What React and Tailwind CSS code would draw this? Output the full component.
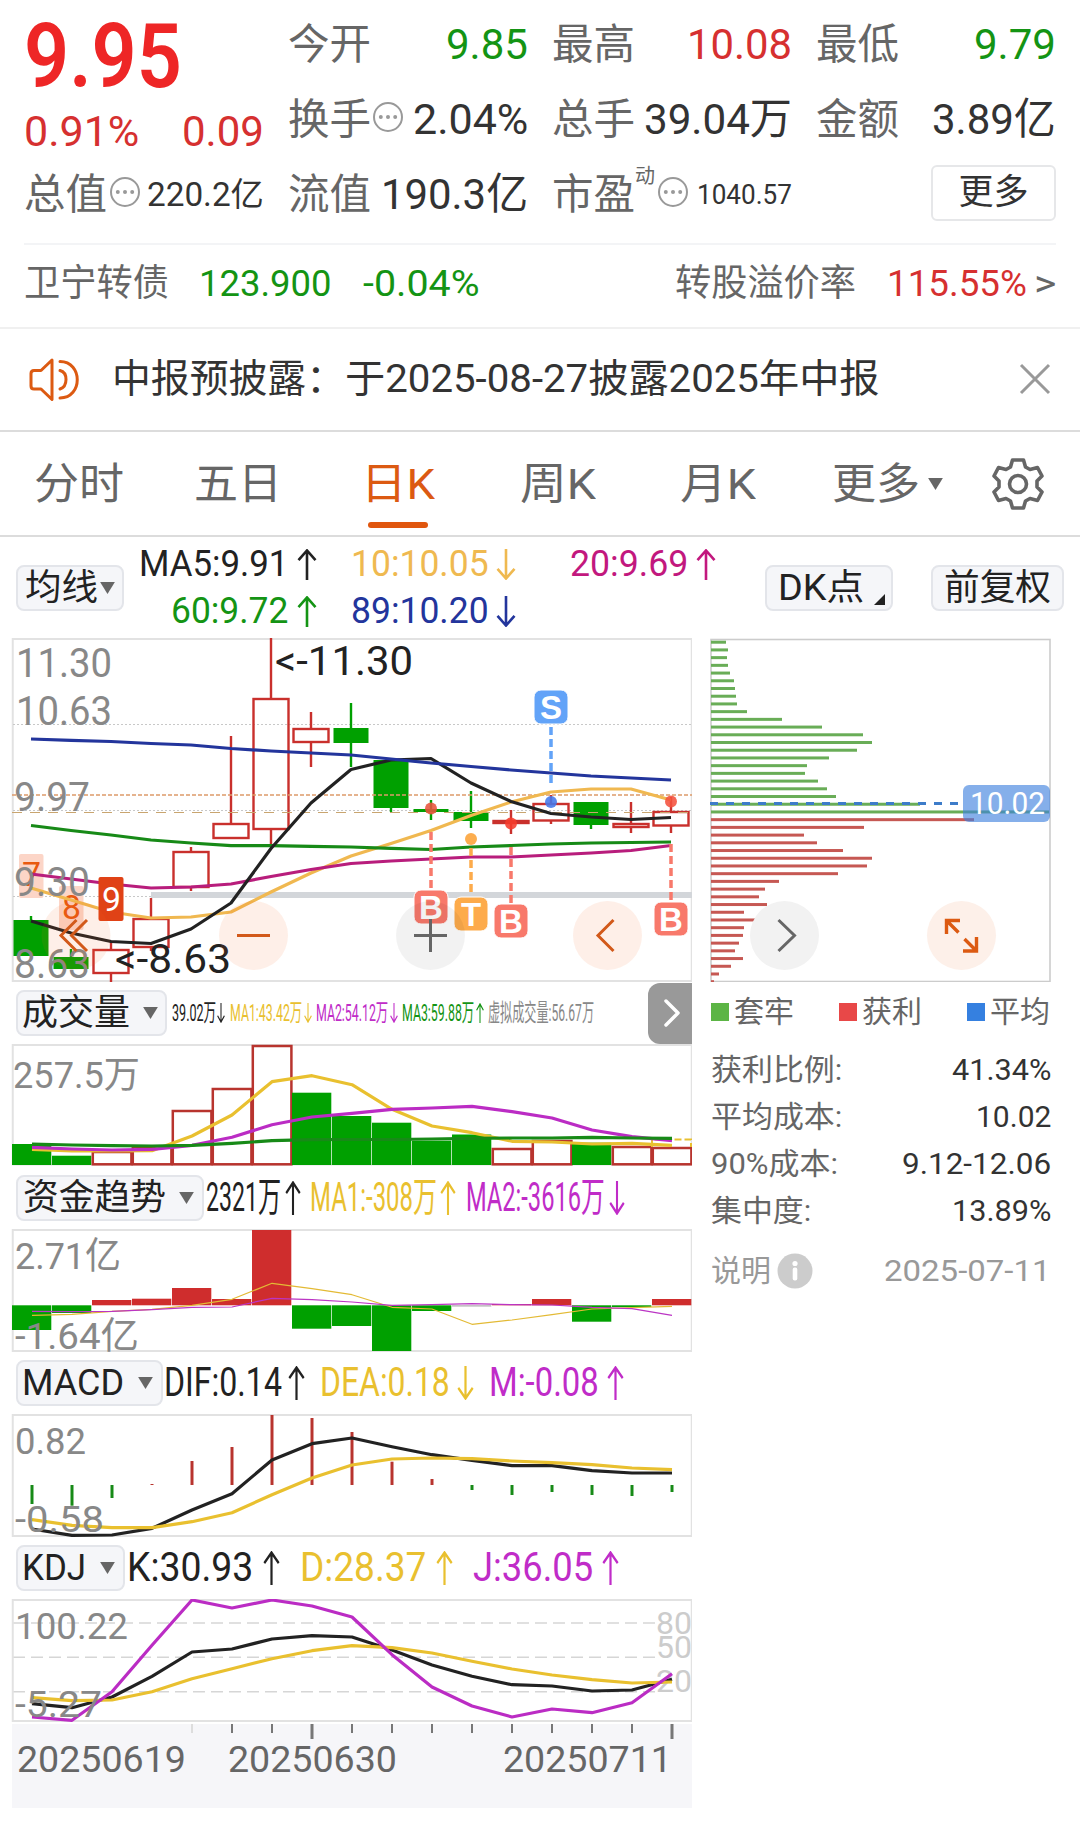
import React, { useLayoutEffect, useRef, useState } from 'react';

const RED = '#c9302c';
const GREEN = '#00a000';
const FONT = 'Roboto, "Noto Sans CJK SC", sans-serif';

// Candles: [open/close top, open/close bottom, wick top, wick bottom, type]
const candles = [
    [920, 956, 916, 956, 'down'],
    [957, 969, 949, 969, 'down'],
    [950, 973, 942, 982, 'up'],
    [919, 947, 898, 951, 'up'],
    [852, 887, 847, 891, 'up'],
    [824, 838, 736, 838, 'up'],
    [699, 829, 638, 844, 'up'],
    [729, 742, 712, 767, 'up'],
    [728, 743, 703, 767, 'down'],
    [760, 808, 760, 812, 'down'],
    [809, 812, 800, 820, 'down'],
    [812, 821, 791, 828, 'down'],
    [821, 823, 810, 834, 'up'],
    [804, 820.5, 795, 824, 'up'],
    [802, 825, 802, 829, 'down'],
    [824, 827, 802, 833, 'up'],
    [812, 825.5, 797, 833, 'up'],
];

const ma = {
    blue: [739, 740.3, 741.5, 743.5, 745, 748.5, 751, 753, 755, 759, 763, 766.5, 770, 773, 776, 778, 780],
    green: [825.5, 830.5, 835, 840, 843, 845.7, 845.7, 846.3, 847, 848.3, 849.5, 847, 845.5, 844, 843, 842.5, 842],
    pink: [874, 879, 884, 888, 887, 884, 876.5, 869.5, 863.5, 861, 859, 857, 857, 855, 853, 850.5, 845.5],
    yellow: [888, 900, 912, 918, 917, 912, 892, 873, 856, 843.5, 830.5, 815.5, 802, 792, 789, 789, 800],
    black: [921, 933, 941.5, 943.5, 929, 903, 848.5, 803, 769.5, 760, 758.5, 783, 801.5, 813.5, 817, 819.5, 817.5],
};

const volume = [
    [1144, 0], [1155.7, 0], [1152, 1], [1147, 1], [1111, 1], [1089, 1], [1046, 1], [1092.7, 0], [1116, 0],
    [1122.7, 0], [1140.7, 0], [1134.5, 0], [1149, 1], [1141, 1], [1142.7, 0], [1147, 1], [1148, 1],
];
const volMa = {
    yellow: [1149.3, 1151, 1151, 1150.7, 1136, 1115, 1081.7, 1075.7, 1084.7, 1109.3, 1126, 1132.7, 1141.3, 1142, 1144, 1143.3, 1145.3],
    purple: [1147.3, 1149, 1150, 1149.3, 1145.3, 1137.3, 1124.7, 1117, 1113.3, 1109.3, 1108, 1106.3, 1111.7, 1118, 1130, 1136.7, 1140.7],
    green: [1144, 1145, 1145.7, 1146, 1145.3, 1143.3, 1140.7, 1139.7, 1139.5, 1139.5, 1139, 1138.3, 1138, 1138, 1137.3, 1138, 1138.3],
};

const fund = [1330, 1313, 1300, 1298.7, 1288, 1299, 1230, 1328.7, 1326, 1351, 1311, 1306.5, 1304, 1299, 1321.7, 1307, 1299];
const fundMa = {
    yellow: [1315.3, 1314.3, 1311.3, 1309.3, 1305.3, 1299.3, 1283.3, 1288.7, 1294.7, 1307.3, 1309, 1324.3, 1320, 1314.7, 1309, 1307.7, 1306.3],
    purple: [1311.3, 1311.7, 1311.3, 1309.7, 1307.3, 1307, 1298.3, 1299.7, 1302, 1305.3, 1304.7, 1303.7, 1304.7, 1305, 1307.3, 1308.7, 1315.3],
};

const macd = [1504, 1505.7, 1498, 1484, 1461, 1447, 1415, 1418, 1432, 1461.7, 1479, 1490, 1495, 1492, 1495, 1496, 1492];
const dif = [1529, 1535.3, 1535, 1528.3, 1510, 1493.7, 1460, 1443.7, 1438, 1446.7, 1454.7, 1460.3, 1465.7, 1465.7, 1470.7, 1473, 1473];
const dea = [1519.7, 1525.3, 1527.7, 1527.7, 1521.7, 1512.7, 1494.7, 1478, 1465, 1459, 1458, 1458.7, 1461, 1462.7, 1464.7, 1468, 1469.7];

const kdj = {
    k: [1703.7, 1707.7, 1697, 1676.3, 1652, 1649, 1639, 1635.7, 1637, 1650, 1665, 1676.3, 1684.7, 1686, 1691, 1690, 1679.3],
    d: [1697.7, 1700.7, 1700, 1691.7, 1678.7, 1668.7, 1658.7, 1650.7, 1645.7, 1647.7, 1653, 1661.3, 1669, 1675, 1679.7, 1683, 1682],
    j: [1717, 1720.3, 1691.7, 1645.3, 1600, 1608, 1600, 1606, 1617, 1654.7, 1687, 1706, 1717, 1709, 1712.7, 1702.7, 1673.7],
};

// Chip distribution, bar lengths in px from top to bottom
const lossChips = [15, 17, 16, 17, 19, 23, 24, 25, 26, 36, 71, 111, 152, 161, 146, 118, 96, 94, 107, 116, 125, 209, 338];
const profitChips = [263, 153, 93, 106, 132, 161, 156, 127, 68, 54, 48, 56, 33, 46, 33, 32, 28, 24, 32, 20, 8, 3];

// Squeezes or stretches its text to the width of the box
function Fit({ className = '', children }) {
    const box = useRef(null);
    const text = useRef(null);
    const [scale, setScale] = useState(1);

    useLayoutEffect(() => {
        setScale(box.current.clientWidth / text.current.offsetWidth);
    }, [children]);

    return (
        <span ref={box} className={`block shrink-0 whitespace-nowrap ${className}`}>
            <span ref={text} className="inline-block origin-left" style={{ transform: `scaleX(${scale})` }}>
                {children}
            </span>
        </span>
    );
}

function Arrow({ up, className = '' }) {
    return (
        <svg viewBox="0 0 20 32" preserveAspectRatio="none" className={`shrink-0 ${className}`} fill="none" stroke="currentColor" strokeWidth="2.6">
            {up ? <path d="M10 32V1.5M1.5 11.500L10 1.500L18.5 11.500" /> : <path d="M10 0V30.500M1.5 20.500L10 30.500L18.5 20.500" />}
        </svg>
    );
}

function Caret({ className = '' }) {
    return (
        <svg viewBox="0 0 16 13" className={`w-[15px] h-[12px] shrink-0 ${className}`} fill="#666">
            <path d="M0 0H16L8 13Z" />
        </svg>
    );
}

function Dots({ className = '' }) {
    return (
        <svg viewBox="0 0 32 32" className={`mb-[6px] h-8 w-8 shrink-0 ${className}`} fill="#999">
            <circle cx="16" cy="16" r="14" fill="none" stroke="#999" strokeWidth="2" />
            <circle cx="8.8" cy="16" r="2" />
            <circle cx="16" cy="16" r="2" />
            <circle cx="23.2" cy="16" r="2" />
        </svg>
    );
}

// Text inside a chart
function Label({ x, y, w, size = 37, fill = '#888', children }) {
    return (
        <text x={x} y={y} fontSize={size} fill={fill} textLength={w} lengthAdjust="spacingAndGlyphs" fontFamily={FONT}>
            {children}
        </text>
    );
}

function Line({ data, x0 = 32, color, width = 3.2 }) {
    const points = data.map((y, i) => `${x0 + i * 40},${y}`).join(' ');
    return <polyline points={points} fill="none" stroke={color} strokeWidth={width} strokeLinejoin="round" />;
}

function Frame({ y, h }) {
    return <rect x="12.75" y={y} width="679" height={h} fill="none" stroke="#e2e2e2" strokeWidth="2" />;
}

function Marker({ x, y, letter, color, from, to, dot, dotColor }) {
    return (
        <g>
            <line x1={x} x2={x} y1={from} y2={to} stroke={color} strokeWidth="3.5" strokeDasharray="8 4" />
            <circle cx={x} cy={dot} r="6" fill={dotColor} opacity="0.88" />
            <rect x={x - 17} y={y - 17} width="34" height="34" rx="7" fill={color} stroke="#fff" strokeWidth="1" />
            <text x={x} y={y + 11.5} textAnchor="middle" fontSize="33" fontWeight="700" fill="#fff" fontFamily='"Liberation Sans", sans-serif'>
                {letter}
            </text>
        </g>
    );
}

function Selector({ className = '', textClass, caretClass, children }) {
    return (
        <button className={`flex h-[46px] shrink-0 items-center rounded-lg border-2 border-[#e3e5ea] bg-[#f5f6f9] text-[36px] leading-[42px] text-[#222] ${className}`}>
            <Fit className={textClass}>{children}</Fit>
            <Caret className={caretClass} />
        </button>
    );
}

function PriceChart() {
    return (
        <svg viewBox="0 638 692 344" className="block w-[692px] h-[344px]">
            <Frame y={639} h={342} />
            {[724.5, 810.5, 896.5].map((y) => (
                <line key={y} x1="13" x2="691" y1={y} y2={y} stroke="#c8c8c8" strokeWidth="1" strokeDasharray="2 2" />
            ))}
            <rect x="151" y="892" width="541" height="6" fill="#d3d6da" />

            {candles.map(([top, bottom, high, low, type], i) => {
                const x = 31 + i * 40;
                const color = type === 'up' ? RED : GREEN;
                return (
                    <g key={i} stroke={color} strokeWidth="2.4">
                        <line x1={x} x2={x} y1={high} y2={top} />
                        <line x1={x} x2={x} y1={bottom} y2={low} />
                        {type === 'up'
                            ? <rect x={x - 17.5} y={top} width="35" height={bottom - top} fill="none" />
                            : <rect x={x - 17.5} y={top} width="35" height={bottom - top} fill={GREEN} stroke="none" />}
                    </g>
                );
            })}

            <line x1="12" x2="692" y1="795" y2="795" stroke="#dd9a6a" strokeWidth="1.5" strokeDasharray="4 2" />
            <line x1="12" x2="692" y1="812.5" y2="812.5" stroke="#c9a56f" strokeWidth="1.2" strokeDasharray="10 8" />

            <rect x="19" y="854" width="24.5" height="44" rx="2" fill="#fcd5c7" />
            <rect x="59" y="886" width="24.5" height="44" rx="2" fill="#fcd5c7" />
            <Label x={22} y={886} w={19} size={34} fill="#e8590f">7</Label>
            <Label x={62} y={919} w={19} size={34} fill="#e8590f">8</Label>

            <Line x0={31} data={ma.yellow} color="#f0b850" />
            <Line x0={31} data={ma.pink} color="#b81d7c" />
            <Line x0={31} data={ma.green} color="#178a17" />
            <Line x0={31} data={ma.black} color="#222" />
            <Line x0={31} data={ma.blue} color="#23359c" />

            <rect x="98.5" y="877" width="25" height="44" rx="2" fill="#e04216" />
            <Label x={102} y={911} w={19} size={34} fill="#fff">9</Label>

            <Label x={16} y={677} w={96} size={41}>11.30</Label>
            <Label x={16} y={725} w={96} size={41}>10.63</Label>
            <Label x={14} y={811} w={76} size={41}>9.97</Label>
            <Label x={14} y={896} w={76} size={41}>9.30</Label>
            <Label x={14} y={978} w={76} size={41}>8.63</Label>
            <Label x={275} y={675} w={138} size={40} fill="#222">&lt;-11.30</Label>
            <Label x={115} y={973} w={116} size={40} fill="#222">&lt;-8.63</Label>

            <Marker x={551} y={707} letter="S" color="#62a3f8" from={727} to={783} dot={802} dotColor="#4379ec" />
            <Marker x={431} y={907} letter="B" color="#f8796b" from={832} to={889} dot={808.5} dotColor="#e8533c" />
            <Marker x={471} y={914} letter="T" color="#fdab4b" from={848} to={896} dot={839} dotColor="#fca237" />
            <Marker x={511} y={921} letter="B" color="#f8796b" from={847} to={903} dot={823.5} dotColor="#f53b2b" />
            <Marker x={671} y={919} letter="B" color="#f8796b" from={844} to={901} dot={801.5} dotColor="#f4513e" />

            {[76, 253.5, 607.5].map((x) => (
                <circle key={x} cx={x} cy="935.5" r="34.5" fill="#f4641e" opacity="0.1" />
            ))}
            <circle cx="430.5" cy="935.5" r="34.5" fill="#000" opacity="0.05" />
            <g fill="none" stroke="#d2591a" strokeWidth="3">
                <path d="M76.5 920L61 935.5L76.5 951M87 920L71.5 935.5L87 951" />
                <path d="M237 935.5H270" />
                <path d="M613.5 920L598 935.5L613.5 951" />
                <path d="M414 935.5H447M430.5 919V952" stroke="#666" />
            </g>
        </svg>
    );
}

function ChipChart() {
    return (
        <svg viewBox="710 638 342 344" className="block w-[342px] h-[344px]">
            <rect x="711" y="639.5" width="339" height="342" fill="none" stroke="#ccc" strokeWidth="1.6" />
            {lossChips.map((w, i) => (
                <rect key={i} x="711" y={640.7 + i * 7.716} width={w} height="3" fill="#69ad57" />
            ))}
            {profitChips.map((w, i) => (
                <rect key={i} x="711" y={640.7 + (i + 23) * 7.716} width={w} height="3" fill="#c65853" />
            ))}
            <line x1="710" x2="960" y1="803.5" y2="803.5" stroke="#3d7cc9" strokeWidth="3" strokeDasharray="8 8" />
            <rect x="963" y="785" width="87" height="37" rx="6" fill="#3d80dd" opacity="0.63" />
            <Label x={970} y={814} w={75} size={31} fill="#fff">10.02</Label>

            <circle cx="784.5" cy="935.5" r="34.5" fill="#f2f2f2" />
            <circle cx="961.5" cy="935.5" r="34.5" fill="#fdf0e9" />
            <path d="M778.5 920L794.5 935.5L778.5 951" fill="none" stroke="#666" strokeWidth="3" />
            <path
                d="M946.5 934V920.5H960M947 921L958.5 932.5M976.5 937V951H963M964.5 939L976 950.5"
                fill="none"
                stroke="#dc5a12"
                strokeWidth="3.4"
            />
        </svg>
    );
}

function VolumeChart() {
    return (
        <svg viewBox="0 1044 692 122" className="block w-[692px] h-[122px]">
            <Frame y={1045} h={119.5} />
            {volume.map(([top, up], i) => up
                ? <rect key={i} x={12.8 + i * 40} y={top} width="38.6" height={1164.3 - top} fill="none" stroke="#b8342e" strokeWidth="2.5" />
                : <rect key={i} x={12 + i * 40} y={top} width="39.3" height={1165 - top} fill={GREEN} />)}
            <path d="M652 1147V1139.5H691V1147" fill="none" stroke="#e8c030" strokeWidth="2" strokeDasharray="7 3" />
            <Line data={volMa.yellow} color="#e9c02f" />
            <Line data={volMa.purple} color="#bb2cc4" />
            <Line data={volMa.green} color="#178a17" />
            <Label x={13} y={1088} w={127}>257.5万</Label>
        </svg>
    );
}

function FundChart() {
    return (
        <svg viewBox="0 1229 692 123" className="block w-[692px] h-[123px]">
            <Frame y={1230} h={121} />
            {fund.map((y, i) => (
                <rect
                    key={i}
                    x={12 + i * 40}
                    y={Math.min(y, 1305.3)}
                    width="39.3"
                    height={Math.abs(y - 1305.3)}
                    fill={i === 11 ? '#aaa' : y < 1305.3 ? '#cf2d2d' : GREEN}
                />
            ))}
            <Line data={fundMa.yellow} color="#e3ba35" width={1.2} />
            <Line data={fundMa.purple} color="#bb35c4" width={1.2} />
            <Label x={15} y={1269} w={106}>2.71亿</Label>
            <Label x={15} y={1348.5} w={124}>-1.64亿</Label>
        </svg>
    );
}

function MacdChart() {
    return (
        <svg viewBox="0 1414 692 123" className="block w-[692px] h-[123px]">
            <Frame y={1415} h={121} />
            {macd.map((y, i) => (
                <line key={i} x1={32 + i * 40} x2={32 + i * 40} y1="1485" y2={y} stroke={y < 1485 ? '#b8342e' : '#178a17'} strokeWidth="3" />
            ))}
            <Line data={dif} color="#222" />
            <Line data={dea} color="#e9c02f" />
            <Label x={15} y={1453.5} w={71}>0.82</Label>
            <Label x={15} y={1531.5} w={89}>-0.58</Label>
        </svg>
    );
}

function KdjChart() {
    return (
        <svg viewBox="0 1599 692 123" className="block w-[692px] h-[123px]">
            {[1623, 1657.3, 1691.7].map((y) => (
                <line key={y} x1="13" x2="658" y1={y} y2={y} stroke="#d6d6d6" strokeWidth="1.6" strokeDasharray="12 6" />
            ))}
            <Frame y={1600} h={121} />
            <Label x={656} y={1634} w={36} size={31} fill="#ccc">80</Label>
            <Label x={656} y={1657.5} w={36} size={31} fill="#ccc">50</Label>
            <Label x={656} y={1691.5} w={36} size={31} fill="#ccc">20</Label>
            <Line data={kdj.k} color="#222" />
            <Line data={kdj.d} color="#e9c02f" />
            <Line data={kdj.j} color="#bb2cc4" />
            <Label x={15} y={1638.5} w={113}>100.22</Label>
            <Label x={15} y={1716.5} w={87}>-5.27</Label>
        </svg>
    );
}

function DateAxis() {
    return (
        <div className="ml-3 mt-[2px] h-[84px] w-[680px] bg-[#f6f6f9]">
            <svg viewBox="12 1724 680 84" className="block w-[680px] h-[84px]">
                {Array.from({ length: 13 }, (_, i) => (
                    <line
                        key={i}
                        x1={192 + i * 40}
                        x2={192 + i * 40}
                        y1="1724"
                        y2={i === 3 || i === 12 ? 1739 : 1733}
                        stroke={i === 0 ? '#ddd' : '#777'}
                        strokeWidth={i === 3 || i === 12 ? 3 : 2}
                    />
                ))}
                <Label x={17} y={1771.5} w={169} fill="#666">20250619</Label>
                <Label x={228} y={1771.5} w={169} fill="#666">20250630</Label>
                <Label x={503} y={1771.5} w={169} fill="#666">20250711</Label>
            </svg>
        </div>
    );
}

function Quote() {
    return (
        <section className="flex h-[243px] justify-between px-6 pt-[7px] text-[43px] text-[#333]">
            <div className="flex w-[240px] flex-col">
                <Fit className="h-[97px] w-[158px] text-[89px] leading-[99px] font-semibold text-[#ee2626]">9.95</Fit>
                <div className="flex h-[54px] items-center justify-between leading-[54px] text-[#d63030]">
                    <Fit className="w-[115px]">0.91%</Fit>
                    <Fit className="w-[82px]">0.09</Fit>
                </div>
                <div className="flex h-[73px] items-center">
                    <Fit className="w-[83px] text-[42px] text-[#666]">总值</Fit>
                    <Dots className="ml-[2px]" />
                    <Fit className="ml-auto w-[117px] text-[33px]">220.2亿</Fit>
                </div>
            </div>
            <div className="flex w-[240px] flex-col">
                <div className="flex h-[75px] items-center justify-between">
                    <Fit className="w-[83px] text-[42px] text-[#666]">今开</Fit>
                    <Fit className="w-[82px] text-[#149414]">9.85</Fit>
                </div>
                <div className="flex h-[75px] items-center">
                    <Fit className="w-[83px] text-[42px] text-[#666]">换手</Fit>
                    <Dots className="ml-[1px]" />
                    <Fit className="ml-auto w-[115px]">2.04%</Fit>
                </div>
                <div className="flex h-[75px] items-center justify-between">
                    <Fit className="w-[83px] text-[42px] text-[#666]">流值</Fit>
                    <Fit className="w-[147px]">190.3亿</Fit>
                </div>
            </div>
            <div className="flex w-[240px] flex-col">
                <div className="flex h-[75px] items-center justify-between">
                    <Fit className="w-[83px] text-[42px] text-[#666]">最高</Fit>
                    <Fit className="w-[105px] text-[#d63030]">10.08</Fit>
                </div>
                <div className="flex h-[75px] items-center justify-between">
                    <Fit className="w-[83px] text-[42px] text-[#666]">总手</Fit>
                    <Fit className="w-[148px]">39.04万</Fit>
                </div>
                <div className="flex h-[75px] items-center">
                    <Fit className="w-[83px] text-[42px] text-[#666]">市盈</Fit>
                    <span className="mb-[38px] text-[20px] leading-5 text-[#666]">动</span>
                    <Dots className="ml-[2px]" />
                    <Fit className="ml-auto w-[95px] text-[28px]">1040.57</Fit>
                </div>
            </div>
            <div className="flex w-[240px] flex-col">
                <div className="flex h-[75px] items-center justify-between">
                    <Fit className="w-[83px] text-[42px] text-[#666]">最低</Fit>
                    <Fit className="w-[82px] text-[#149414]">9.79</Fit>
                </div>
                <div className="flex h-[75px] items-center justify-between">
                    <Fit className="w-[83px] text-[42px] text-[#666]">金额</Fit>
                    <Fit className="w-[124px]">3.89亿</Fit>
                </div>
                <div className="flex h-[75px] items-center justify-end">
                    <button className="mb-[3px] h-14 w-[125px] rounded-md border-2 border-[#e6e7e9] text-[35px] leading-[50px]">更多</button>
                </div>
            </div>
        </section>
    );
}

function Tabs() {
    return (
        <nav className="flex h-[105px] items-center border-b-2 border-[#dcdcdc] pl-[34px] text-[43px] leading-[60px] text-[#666]">
            <Fit className="w-[90px]">分时</Fit>
            <Fit className="ml-[70px] w-[88px]">五日</Fit>
            <div className="ml-[79px] flex h-[105px] flex-col items-center pt-[23px] text-[#dc5a12]">
                <Fit className="w-[74px]">日K</Fit>
                <span className="mt-2 h-[6px] w-[60px] rounded-full bg-[#e0560e]" />
            </div>
            <Fit className="ml-[85px] w-[76px]">周K</Fit>
            <Fit className="ml-[84px] w-[76px]">月K</Fit>
            <Fit className="ml-[76px] w-[88px]">更多</Fit>
            <Caret className="ml-2" />
            <svg viewBox="-27 -27 54 54" className="ml-[48px] h-[54px] w-[54px]" fill="none" stroke="#666" strokeWidth="3.6" strokeLinejoin="round">
                <path d="M-5.5 -24H5.5L7.5 -17L12 -14.5L19.5 -16.5L24 -8L19 -3V3L24 8L19.5 16.5L12 14.5L7.5 17L5.5 24H-5.5L-7.5 17L-12 14.5L-19.5 16.5L-24 8L-19 3V-3L-24 -8L-19.5 -16.5L-12 -14.5L-7.5 -17Z" />
                <circle r="8.5" />
            </svg>
        </nav>
    );
}

function Averages() {
    return (
        <div className="flex h-[101px] items-center px-4 text-[36px] leading-[47px]">
            <Selector className="w-[108px] pl-[7px]" textClass="w-[73px]" caretClass="ml-[2px]">均线</Selector>
            <div className="ml-[15px] flex flex-col items-end">
                <div className="flex items-center text-[#222]">
                    <Fit className="w-[149px]">MA5:9.91</Fit>
                    <Arrow up className="ml-[9px] h-[31px] w-[20px]" />
                </div>
                <div className="flex items-center text-[#149414]">
                    <Fit className="w-[117px]">60:9.72</Fit>
                    <Arrow up className="ml-[9px] h-[31px] w-[20px]" />
                </div>
            </div>
            <div className="ml-[34px] flex flex-col">
                <div className="flex items-center text-[#efb950]">
                    <Fit className="w-[138px]">10:10.05</Fit>
                    <Arrow className="ml-[7px] h-[31px] w-[20px]" />
                </div>
                <div className="flex items-center text-[#23359c]">
                    <Fit className="w-[138px]">89:10.20</Fit>
                    <Arrow className="ml-[7px] h-[31px] w-[20px]" />
                </div>
            </div>
            <div className="mb-[47px] ml-[54px] flex items-center text-[#c2187e]">
                <Fit className="w-[118px]">20:9.69</Fit>
                <Arrow up className="ml-[8px] h-[31px] w-[20px]" />
            </div>
            <button className="ml-auto flex h-[46px] w-[128px] rounded-lg border-2 border-[#e3e5ea] bg-[#f5f6f9] pl-[9px] leading-[42px] text-[#222]">
                <Fit className="w-[86px]">DK点</Fit>
                <svg viewBox="0 0 12 12" className="mt-[27px] ml-[12px] h-[11px] w-[11px]" fill="#222"><path d="M12 0V12H0Z" /></svg>
            </button>
            <button className="ml-[38px] h-[46px] w-[133px] rounded-lg border-2 border-[#e3e5ea] bg-[#f5f6f9] pl-[11px] leading-[42px] text-[#222]">
                <Fit className="w-[107px]">前复权</Fit>
            </button>
        </div>
    );
}

const costs = [
    { label: '获利比例:', labelClass: 'w-[131px]', value: '41.34%', valueClass: 'w-[99px]' },
    { label: '平均成本:', labelClass: 'w-[131px]', value: '10.02', valueClass: 'w-[75px]' },
    { label: '90%成本:', labelClass: 'w-[127px]', value: '9.12-12.06', valueClass: 'w-[149px]' },
    { label: '集中度:', labelClass: 'w-[100px]', value: '13.89%', valueClass: 'w-[99px]' },
];

function ChipPanel() {
    return (
        <aside className="ml-[18px] w-[342px]">
            <ChipChart />
            <div className="ml-[1px] flex h-[60px] w-[339px] items-center justify-between text-[30px] leading-[60px] text-[#666]">
                <span className="flex items-center gap-[5px]"><i className="h-[18px] w-[18px] bg-[#5cb545]" />套牢</span>
                <span className="flex items-center gap-[5px]"><i className="h-[18px] w-[18px] bg-[#e84848]" />获利</span>
                <span className="flex items-center gap-[5px]"><i className="h-[18px] w-[18px] bg-[#3580e0]" />平均</span>
            </div>
            <div className="mt-[4px] ml-[1px] w-[340px] text-[30px] leading-[47px]">
                {costs.map((row) => (
                    <div key={row.label} className="flex h-[47px] justify-between">
                        <Fit className={`text-[#666] ${row.labelClass}`}>{row.label}</Fit>
                        <Fit className={`text-[#333] ${row.valueClass}`}>{row.value}</Fit>
                    </div>
                ))}
            </div>
            <div className="mt-[13px] ml-[1px] flex h-[47px] w-[339px] items-center text-[30px] leading-[47px] text-[#999]">
                <Fit className="w-[60px]">说明</Fit>
                <svg viewBox="0 0 36 36" className="ml-[6px] h-9 w-9" fill="#fff">
                    <circle cx="18" cy="18" r="17.5" fill="#ccc" />
                    <circle cx="18" cy="10.5" r="2.6" />
                    <rect x="15.7" y="14.5" width="4.6" height="13" rx="2" />
                </svg>
                <Fit className="ml-auto w-[166px]">2025-07-11</Fit>
            </div>
        </aside>
    );
}

export default function App() {
    return (
        <main className="h-[1825px] w-[1080px] overflow-hidden bg-white font-[Roboto,'Noto_Sans_CJK_SC',sans-serif]">
            <Quote />
            <div className="mx-6 flex h-[84px] items-center border-t-2 border-[#f3f4f6] pb-[5px] text-[37px] leading-[60px] text-[#666]">
                <Fit className="w-[145px]">卫宁转债</Fit>
                <Fit className="ml-[30px] w-[133px] text-[#149414]">123.900</Fit>
                <Fit className="ml-[31px] w-[116px] text-[#149414]">-0.04%</Fit>
                <Fit className="ml-auto w-[181px]">转股溢价率</Fit>
                <Fit className="ml-[31px] w-[140px] text-[#d63030]">115.55%</Fit>
                <Fit className="ml-[7px] w-[22px]">&gt;</Fit>
            </div>

            <div className="flex h-[105px] items-center border-y-2 border-t-[#f0f0f0] border-b-[#dcdcdc] pr-[29px] pb-[2px] pl-[28px] text-[39px] leading-[60px] text-[#333]">
                <svg viewBox="28 356 54 46" className="h-[46px] w-[54px]" fill="none" stroke="#dc5a12" strokeWidth="3" strokeLinejoin="round">
                    <path d="M52 360L41 370.500H34Q31 370.500 31 373.500V386Q31 389 34 389H41L52 399.500Z" />
                    <path d="M60 370.500Q66 372 66 379.500Q66 387 60 389" strokeLinecap="round" />
                    <path d="M60 361.500C83 361.500 83 398 60 398" strokeLinecap="round" />
                </svg>
                <Fit className="ml-[30px] w-[233px]">中报预披露：</Fit>
                <Fit className="w-[535px]">于2025-08-27披露2025年中报</Fit>
                <svg viewBox="0 0 32 32" className="ml-auto h-8 w-8" stroke="#999" strokeWidth="3"><path d="M2 2L30 30M30 2L2 30" /></svg>
            </div>

            <Tabs />
            <Averages />

            <div className="flex">
                <div className="w-[692px]">
                    <PriceChart />
                    <div className="flex h-[62px] items-center pl-4 text-[24px] leading-[60px]">
                        <Selector className="w-[151px] pl-[4px]" textClass="w-[108px]" caretClass="ml-[13px]">成交量</Selector>
                        <Fit className="ml-[5px] w-[44px] text-[#222]">39.02万</Fit>
                        <Arrow className="ml-[1px] h-5 w-[8px] text-[#222]" />
                        <Fit className="ml-[5px] w-[72px] text-[#e9c02f]">MA1:43.42万</Fit>
                        <Arrow className="ml-[2px] h-5 w-[8px] text-[#e9c02f]" />
                        <Fit className="ml-[4px] w-[72px] text-[#c02cc8]">MA2:54.12万</Fit>
                        <Arrow className="ml-[2px] h-5 w-[8px] text-[#c02cc8]" />
                        <Fit className="ml-[4px] w-[72px] text-[#149414]">MA3:59.88万</Fit>
                        <Arrow up className="ml-[2px] h-5 w-[8px] text-[#149414]" />
                        <Fit className="ml-[4px] w-[106px] text-[#888]">虚拟成交量:56.67万</Fit>
                        <button className="ml-auto flex h-[61px] w-[44px] items-center justify-center rounded-l-xl bg-[#999] pl-1">
                            <svg viewBox="0 0 18 30" className="h-[30px] w-[18px]" fill="none" stroke="#fff" strokeWidth="3.5" strokeLinecap="round" strokeLinejoin="round">
                                <path d="M3 3L15 15L3 27" />
                            </svg>
                        </button>
                    </div>
                    <VolumeChart />
                    <div className="flex h-[63px] items-center pl-4 text-[40px] leading-[60px]">
                        <Selector className="w-[188px] pl-[5px]" textClass="w-[143px]" caretClass="ml-[13px]">资金趋势</Selector>
                        <Fit className="ml-[2px] w-[75px] text-[#222]">2321万</Fit>
                        <Arrow up className="ml-[4px] h-[34px] w-[16px] text-[#222]" />
                        <Fit className="ml-[9px] w-[127px] text-[#e9c02f]">MA1:-308万</Fit>
                        <Arrow up className="ml-[3px] h-[34px] w-[16px] text-[#e9c02f]" />
                        <Fit className="ml-[10px] w-[139px] text-[#c02cc8]">MA2:-3616万</Fit>
                        <Arrow className="ml-[4px] h-[34px] w-[16px] text-[#c02cc8]" />
                    </div>
                    <FundChart />
                    <div className="flex h-[62px] items-center pl-4 text-[40px] leading-[60px]">
                        <Selector className="w-[147px] pl-[4px]" textClass="w-[102px]" caretClass="ml-[14px]">MACD</Selector>
                        <Fit className="ml-[1px] w-[118px] text-[#222]">DIF:0.14</Fit>
                        <Arrow up className="ml-[6px] h-[34px] w-[17px] text-[#222]" />
                        <Fit className="ml-[15px] w-[130px] text-[#e9c02f]">DEA:0.18</Fit>
                        <Arrow className="ml-[7px] h-[34px] w-[17px] text-[#e9c02f]" />
                        <Fit className="ml-[15px] w-[110px] text-[#c02cc8]">M:-0.08</Fit>
                        <Arrow up className="ml-[8px] h-[34px] w-[17px] text-[#c02cc8]" />
                    </div>
                    <MacdChart />
                    <div className="flex h-[62px] items-center pl-4 text-[40px] leading-[60px]">
                        <Selector className="w-[109px] pl-[4px]" textClass="w-[64px]" caretClass="ml-[14px]">KDJ</Selector>
                        <Fit className="ml-[2px] w-[126px] text-[#222]">K:30.93</Fit>
                        <Arrow up className="ml-[10px] h-[34px] w-[17px] text-[#222]" />
                        <Fit className="ml-[20px] w-[126px] text-[#e9c02f]">D:28.37</Fit>
                        <Arrow up className="ml-[10px] h-[34px] w-[17px] text-[#e9c02f]" />
                        <Fit className="ml-[20px] w-[120px] text-[#c02cc8]">J:36.05</Fit>
                        <Arrow up className="ml-[9px] h-[34px] w-[17px] text-[#c02cc8]" />
                    </div>
                    <KdjChart />
                    <DateAxis />
                </div>
                <ChipPanel />
            </div>
        </main>
    );
}
